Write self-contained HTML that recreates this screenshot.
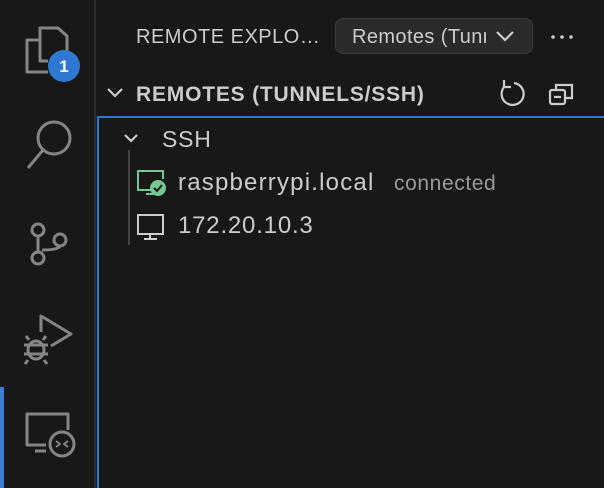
<!DOCTYPE html>
<html style="overflow:hidden"><head><style>
html,body{margin:0;width:604px;height:488px;overflow:hidden}
body{background:#181818;font-family:"Liberation Sans",sans-serif;position:relative;color:#ccc}
.ab{position:absolute;left:0;top:0;width:94px;height:488px;background:#181818;border-right:2px solid #2b2b2b}
.ind{position:absolute;left:0;top:387px;width:4px;height:101px;background:#3b7fd6}
svg{position:absolute;overflow:visible}
.t{position:absolute;white-space:nowrap}
.focus{position:absolute;left:97px;top:116px;width:507px;height:372px;border-left:2px solid #2f78d1;border-top:2px solid #2f78d1;box-sizing:border-box}
</style></head><body>
<div class="ab"></div><div class="ind"></div>
<svg width="100" height="488" style="left:0;top:0" fill="none" stroke="#858585" stroke-width="3" stroke-linejoin="round">
<path d="M40 40 V28 H58 L67 36 V56"/><path d="M40 40 H27 V72 H48"/><path d="M40 40 V61 H48"/>
<circle cx="64" cy="66" r="16" fill="#2f78d1" stroke="none"/>
<text x="64" y="72" fill="#fff" stroke="none" font-family="Liberation Sans" font-weight="bold" font-size="17" text-anchor="middle">1</text>
<circle cx="54" cy="138" r="16"/><path d="M43 150 L28 168"/>
<circle cx="38" cy="230" r="6"/><circle cx="38" cy="258" r="6"/><circle cx="60" cy="240" r="6"/><path d="M38 236 V252 M60 246 Q58 250 42 250"/>
<path d="M41 332 V316 L71 334 L51 346"/><ellipse cx="36" cy="350" rx="8" ry="9"/><path d="M24 345 H48 M24 354 H48 M28 360 L25 364 M44 360 L47 364 M29 340 L26 336 M43 340 L46 336"/>
<path d="M46 445 H27 V414 H68 V430"/><path d="M35 451 H46"/><circle cx="62" cy="444" r="12"/><path d="M56 441 L60 444 L56 447 M68 441 L64 444 L68 447" stroke-width="2"/>
</svg>
<div class="t" style="left:136px;top:26px;font-size:20px;color:#ccc;letter-spacing:0.5px">REMOTE EXPLO…</div>
<div style="position:absolute;left:335px;top:18px;width:198px;height:36px;background:#2a2a2a;border:1px solid #3c3c3c;border-radius:8px;box-sizing:border-box"></div>
<div class="t" style="left:352px;top:26px;font-size:20px;color:#ccc;width:134px;overflow:hidden;letter-spacing:0.4px">Remotes (Tunnels/SSH)</div>
<svg width="604" height="488" style="left:0;top:0" fill="none" stroke="#ccc" stroke-width="2.2">
<path d="M497 32 L505 40 L513 32"/>
<circle cx="553" cy="37" r="1.8" fill="#ccc" stroke="none"/><circle cx="562" cy="37" r="1.8" fill="#ccc" stroke="none"/><circle cx="571" cy="37" r="1.8" fill="#ccc" stroke="none"/>
<path d="M108 89 L115 96 L122 89"/>
<path d="M505 86 A11 11 0 1 0 514 83" /><path d="M504 80 V87 H511"/>
<rect x="550" y="90" width="15" height="14" rx="2"/><path d="M556 90 V85 H572 V98 H565 M554 97 H561"/>
<path d="M125 135 L131 141 L137 135"/>
<path d="M129 150 V245" stroke="#444" stroke-width="2"/>
</svg>
<div class="t" style="left:136px;top:83px;font-size:21px;font-weight:bold;color:#ccc;letter-spacing:0.8px">REMOTES (TUNNELS/SSH)</div>
<div class="focus"></div>
<div class="t" style="left:162px;top:126px;font-size:23px;color:#ccc;letter-spacing:0.8px">SSH</div>
<svg width="604" height="488" style="left:0;top:0" fill="none" stroke-width="2">
<path d="M152 190 H138 V171 H163 V179 M146 194 H155" stroke="#73c991"/>
<circle cx="158" cy="188" r="8" fill="#73c991"/><path d="M154 188 L157 191 L162 185" stroke="#181818"/>
<rect x="138" y="215" width="25" height="19" stroke="#ccc"/><path d="M150 234 V239 M144 239 H157" stroke="#ccc"/>
</svg>
<div class="t" style="left:178px;top:169px;font-size:24px;color:#ccc;letter-spacing:1.2px">raspberrypi.local</div>
<div class="t" style="left:394px;top:172px;font-size:21px;color:#999;letter-spacing:0.6px">connected</div>
<div class="t" style="left:178px;top:212px;font-size:24px;color:#ccc;letter-spacing:0.8px">172.20.10.3</div>
</body></html>
